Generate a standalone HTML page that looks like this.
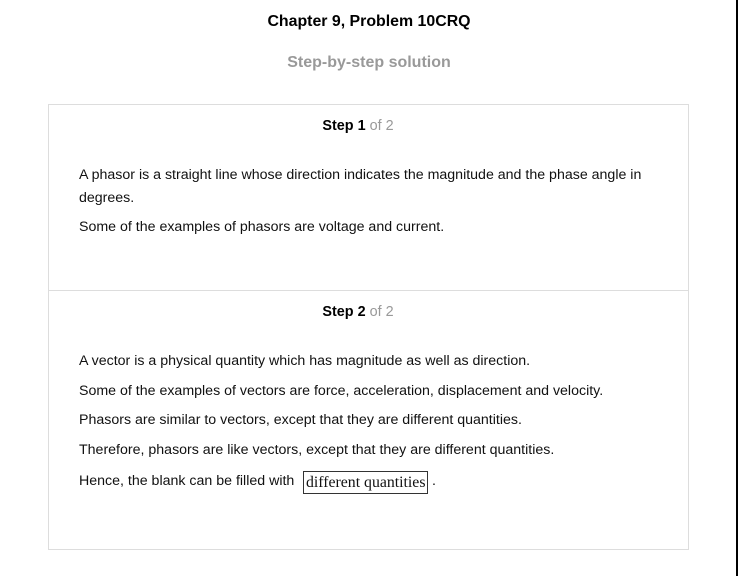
<!DOCTYPE html>
<html><head><style>
body{margin:0;width:738px;height:576px;background:#fff;position:relative;overflow:hidden;font-family:"Liberation Sans",Arial,sans-serif;color:#111}
.a{position:absolute;white-space:nowrap}
.t{font-size:14.2px;left:79px}
</style></head><body>
<div class="a" style="left:0;width:738px;top:13px;text-align:center;font-size:15.9px;font-weight:bold;color:#000">Chapter 9, Problem 10CRQ</div>
<div class="a" style="left:0;width:738px;top:54px;text-align:center;font-size:16px;font-weight:bold;color:#999">Step-by-step solution</div>
<div class="a" style="left:48px;top:104px;width:639px;height:444px;border:1px solid #ddd"></div>
<div class="a" style="left:49px;top:290px;width:639px;height:1px;background:#ddd"></div>
<div class="a" style="left:736px;top:0;width:2px;height:576px;background:#000"></div>
<div class="a" style="left:-11px;width:738px;top:118px;text-align:center;font-size:14.4px;color:#000"><b>Step 1</b> <span style="color:#999">of 2</span></div>
<div class="a t" style="top:167px">A phasor is a straight line whose direction indicates the magnitude and the phase angle in</div>
<div class="a t" style="top:190px">degrees.</div>
<div class="a t" style="top:219px">Some of the examples of phasors are voltage and current.</div>
<div class="a" style="left:-11px;width:738px;top:304px;text-align:center;font-size:14.4px;color:#000"><b>Step 2</b> <span style="color:#999">of 2</span></div>
<div class="a t" style="top:353px">A vector is a physical quantity which has magnitude as well as direction.</div>
<div class="a t" style="top:383px">Some of the examples of vectors are force, acceleration, displacement and velocity.</div>
<div class="a t" style="top:412px">Phasors are similar to vectors, except that they are different quantities.</div>
<div class="a t" style="top:442px">Therefore, phasors are like vectors, except that they are different quantities.</div>
<div class="a t" style="top:473px">Hence, the blank can be filled with</div>
<div class="a" style="left:303px;top:471px;height:21px;padding:0 2px;border:1px solid #333;font-family:'Liberation Serif',serif;font-size:15.8px;line-height:21px">different quantities</div>
<div class="a t" style="left:432px;top:473px">.</div>
</body></html>
